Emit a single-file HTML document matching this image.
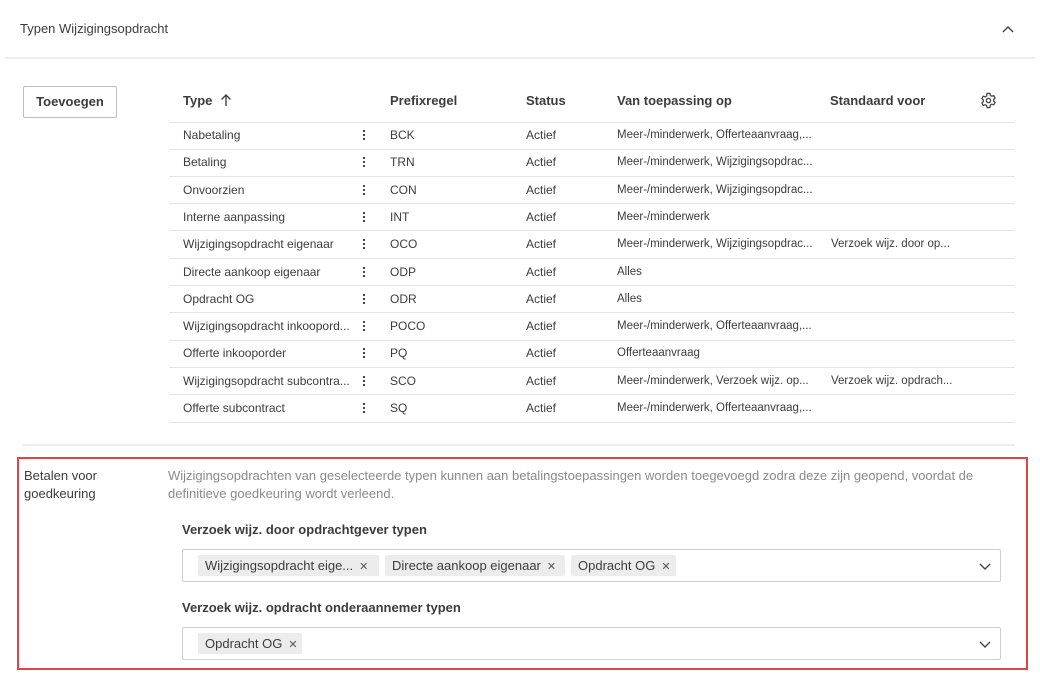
<!DOCTYPE html>
<html><head><meta charset="utf-8"><style>
*{margin:0;padding:0;box-sizing:border-box}
body{width:1040px;height:683px;background:#fff;font-family:"Liberation Sans",sans-serif;color:#3c3c3c;position:relative;overflow:hidden}
.a{position:absolute;white-space:nowrap}
.hl{position:absolute;height:1px;background:#e4e4e4}
.th{font-size:13px;font-weight:bold;color:#3c3c3c}
.td{font-size:12px;color:#3c3c3c}
.dots{position:absolute;width:3px}
.dots i{display:block;width:2px;height:2px;background:#444;margin-bottom:2px}
.box{position:absolute;left:182px;width:819px;height:33px;border:1px solid #cfcfcf;border-radius:2px}
.chip{position:absolute;top:5px;height:21px;background:#ececec;border-radius:2px;font-size:13px;line-height:21px;padding:0 7px;color:#3c3c3c;white-space:nowrap}
.chip span{font-size:11px;margin-left:6px;color:#555}
</style></head><body>
<div class="a" style="left:20px;top:21px;font-size:13px;color:#3c3c3c">Typen Wijzigingsopdracht</div>
<svg class="a" style="left:1002px;top:25px" width="12" height="8" viewBox="0 0 12 8"><path d="M1 7L6 2L11 7" fill="none" stroke="#444" stroke-width="1.4"/></svg>
<div class="hl" style="left:5px;top:57px;width:1030px;height:2px;background:#ececec"></div>

<div class="a" style="left:23px;top:86px;width:94px;height:32px;border:1px solid #bdbdbd;border-radius:2px;font-size:13px;font-weight:bold;text-align:center;line-height:30px">Toevoegen</div>

<div class="a th" style="left:183px;top:93px">Type</div>
<svg class="a" style="left:220px;top:94px" width="12" height="13" viewBox="0 0 12 13"><path d="M6 12V1M1.5 5.5L6 1L10.5 5.5" fill="none" stroke="#444" stroke-width="1.4"/></svg>
<div class="a th" style="left:390px;top:93px">Prefixregel</div>
<div class="a th" style="left:526px;top:93px">Status</div>
<div class="a th" style="left:617px;top:93px">Van toepassing op</div>
<div class="a th" style="left:830px;top:93px">Standaard voor</div>
<svg class="a" style="left:980px;top:92px" width="17" height="17" viewBox="0 0 24 24"><path d="M10 2h4l.6 2.8 2.1 1.2 2.7-.9 2 3.4-2.1 1.9v2.4l2.1 1.9-2 3.4-2.7-.9-2.1 1.2L14 22h-4l-.6-2.8-2.1-1.2-2.7.9-2-3.4 2.1-1.9v-2.4L2.6 9.3l2-3.4 2.7.9 2.1-1.2z" fill="none" stroke="#444" stroke-width="1.8" stroke-linejoin="round"/><circle cx="12" cy="12" r="3" fill="none" stroke="#444" stroke-width="1.8"/></svg>
<div class="hl" style="left:169px;top:122px;width:846px"></div>

<div id="rows"></div>
<script>
var d=[["Nabetaling","BCK","Meer-/minderwerk, Offerteaanvraag,...",""],
["Betaling","TRN","Meer-/minderwerk, Wijzigingsopdrac...",""],
["Onvoorzien","CON","Meer-/minderwerk, Wijzigingsopdrac...",""],
["Interne aanpassing","INT","Meer-/minderwerk",""],
["Wijzigingsopdracht eigenaar","OCO","Meer-/minderwerk, Wijzigingsopdrac...","Verzoek wijz. door op..."],
["Directe aankoop eigenaar","ODP","Alles",""],
["Opdracht OG","ODR","Alles",""],
["Wijzigingsopdracht inkoopord...","POCO","Meer-/minderwerk, Offerteaanvraag,...",""],
["Offerte inkooporder","PQ","Offerteaanvraag",""],
["Wijzigingsopdracht subcontra...","SCO","Meer-/minderwerk, Verzoek wijz. op...","Verzoek wijz. opdrach..."],
["Offerte subcontract","SQ","Meer-/minderwerk, Offerteaanvraag,...",""]];
var h="";
d.forEach(function(r,i){var c=135+i*27.3;var t=c-7;
h+='<div class="a td" style="left:183px;top:'+t+'px">'+r[0]+'</div>';
h+='<div class="dots" style="left:363px;top:'+(c-5)+'px"><i></i><i></i><i></i></div>';
h+='<div class="a td" style="left:390px;top:'+t+'px">'+r[1]+'</div>';
h+='<div class="a td" style="left:526px;top:'+t+'px">Actief</div>';
h+='<div class="a td" style="left:617px;top:'+(t+1)+'px;font-size:11.5px">'+r[2]+'</div>';
h+='<div class="a td" style="left:831px;top:'+(t+1)+'px;font-size:11.5px">'+r[3]+'</div>';
h+='<div class="hl" style="left:169px;top:'+(c+13.5)+'px;width:846px"></div>';});
document.getElementById("rows").innerHTML=h;
</script>

<div class="hl" style="left:23px;top:444px;width:992px;height:2px;background:#ececec"></div>
<div class="a" style="left:17px;top:457px;width:1011px;height:213px;border:2px solid #e04545"></div>
<div class="a" style="left:24px;top:467px;font-size:13px;line-height:18px;color:#3c3c3c">Betalen voor<br>goedkeuring</div>
<div class="a" style="left:168px;top:467px;font-size:13px;line-height:18px;color:#8a8a8a;white-space:normal;width:845px">Wijzigingsopdrachten van geselecteerde typen kunnen aan betalingstoepassingen worden toegevoegd zodra deze zijn geopend, voordat de definitieve goedkeuring wordt verleend.</div>
<div class="a" style="left:182px;top:522px;font-size:13px;font-weight:bold">Verzoek wijz. door opdrachtgever typen</div>
<div class="box" style="top:549px">
<div class="chip" style="left:15px;width:181px">Wijzigingsopdracht eige...<span>✕</span></div>
<div class="chip" style="left:202px;width:180px">Directe aankoop eigenaar<span>✕</span></div>
<div class="chip" style="left:388px;width:105px">Opdracht OG<span>✕</span></div>
<svg class="a" style="left:796px;top:13px" width="12" height="8" viewBox="0 0 12 8"><path d="M1 1L6 6L11 1" fill="none" stroke="#444" stroke-width="1.4"/></svg>
</div>
<div class="a" style="left:182px;top:600px;font-size:13px;font-weight:bold">Verzoek wijz. opdracht onderaannemer typen</div>
<div class="box" style="top:627px">
<div class="chip" style="left:15px;width:104px">Opdracht OG<span>✕</span></div>
<svg class="a" style="left:796px;top:13px" width="12" height="8" viewBox="0 0 12 8"><path d="M1 1L6 6L11 1" fill="none" stroke="#444" stroke-width="1.4"/></svg>
</div>
</body></html>
